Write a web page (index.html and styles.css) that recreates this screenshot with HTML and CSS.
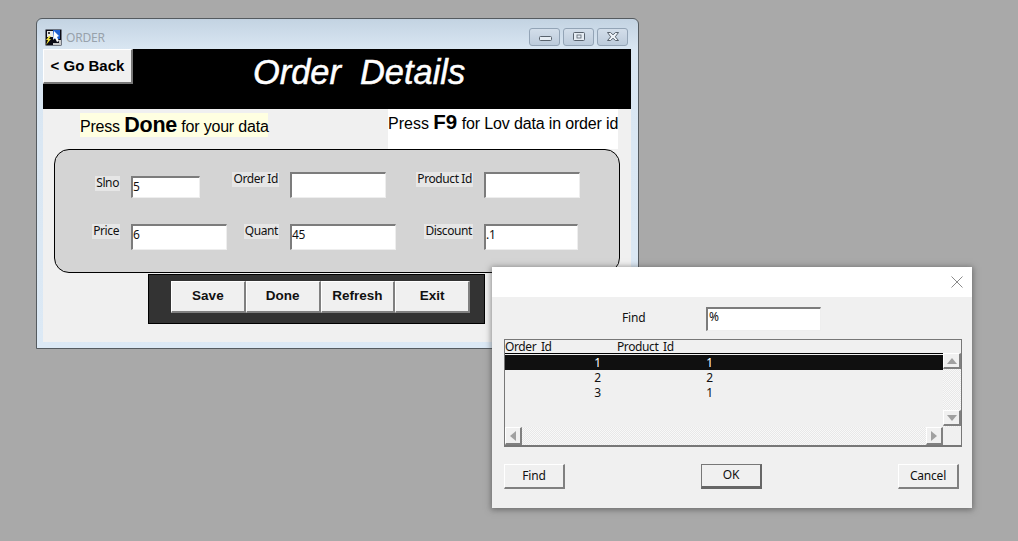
FILE: index.html
```html
<!DOCTYPE html>
<html lang="en">
<head>
<meta charset="utf-8">
<title>ORDER</title>
<link rel="stylesheet" href="styles.css">
</head>
<body>
<main class="desktop">
  <section class="window">
    <div class="titlebar">
      <svg class="app-icon" width="17" height="17" viewBox="0 0 17 17">
        <rect x="0.5" y="0.5" width="16" height="16" fill="#0a0a14"/>
        <path d="M2 2h6v6H2z" fill="#e8e8e8"/>
        <path d="M3 3h2v2H3z" fill="#444"/>
        <path d="M8 1h7v9H8z" fill="#1f5fd0"/>
        <path d="M9 2l5 5-2 1 2 4-2 1-2-4-2 2z" fill="#fff"/>
        <path d="M4 7l-3 4h2l-2 5 5-6H4l2-3z" fill="#f2e23a"/>
        <path d="M14 11h2v5H8v-2h6z" fill="#c8c8c8"/>
      </svg>
      <span class="caption">ORDER</span>
      <div class="winbtns">
        <span class="winbtn"><svg width="16" height="10" viewBox="0 0 16 10"><rect x="2.500" y="4.500" width="12" height="4" rx="1" fill="#e6edf4" stroke="#59636e"/></svg></span>
        <span class="winbtn"><svg width="14" height="12" viewBox="0 0 14 12"><rect x="1.500" y="1.500" width="11" height="8" rx="1" fill="#e6edf4" stroke="#59636e"/><rect x="5" y="4" width="4" height="3" fill="#e6edf4" stroke="#59636e" stroke-width="0.8"/></svg></span>
        <span class="winbtn"><svg width="16" height="12" viewBox="0 0 16 12"><path d="M2.500 1.500h3L8 3.800l2.500-2.300h3L10.300 5.800l3.200 3.700h-3L8 7.300 5.500 9.500h-3l3.200-3.700z" fill="#eef3f8" stroke="#59636e"/></svg></span>
      </div>
    </div>
    <div class="client">
      <header class="banner">
        <button class="goback" type="button">&lt; Go Back</button>
        <h1 class="heading">Order  Details</h1>
      </header>
      <div class="hints">
        <p class="hint-done">Press <b>Done</b> for your data</p>
        <p class="hint-f9">Press <b>F9</b> <span class="tight">for Lov data in order id</span></p>
      </div>
      <form class="panel">
        <label class="lbl low">Slno</label>
        <input class="fld low short" value="5">
        <label class="lbl">Order Id</label>
        <input class="fld w96" value="">
        <label class="lbl">Product Id</label>
        <input class="fld w96" value="">
        <label class="lbl">Price</label>
        <input class="fld w96" value="6">
        <label class="lbl">Quant</label>
        <input class="fld w106" value="45">
        <label class="lbl">Discount</label>
        <input class="fld w94" value=".1">
      </form>
      <div class="toolbar">
        <button class="tbtn" type="button">Save</button>
        <button class="tbtn" type="button">Done</button>
        <button class="tbtn" type="button">Refresh</button>
        <button class="tbtn" type="button">Exit</button>
      </div>
    </div>
  </section>

  <section class="dialog">
    <div class="dlg-title">
      <svg class="dlg-x" width="12" height="12" viewBox="0 0 12 12"><path d="M0.500 0.500l11 11M11.500 0.500l-11 11" stroke="#8a8a8a" fill="none"/></svg>
    </div>
    <div class="dlg-body">
      <div class="find-row">
        <span class="find-label">Find</span>
        <input class="fld find-input" value="%">
      </div>
      <div class="list">
        <div class="list-head"><span class="hcol1">Order Id</span><span>Product Id</span></div>
        <div class="list-grid">
          <div class="rows">
            <div class="row selected"><span class="c1">1</span><span class="c2">1</span></div>
            <div class="row"><span class="c1">2</span><span class="c2">2</span></div>
            <div class="row"><span class="c1">3</span><span class="c2">1</span></div>
          </div>
          <div class="vscroll">
            <span class="sbtn vbtn"><svg width="10" height="6" viewBox="0 0 10 6"><path d="M5 0l5 6H0z" fill="#a0a0a0"/></svg></span>
            <span class="sbtn vbtn"><svg width="10" height="6" viewBox="0 0 10 6"><path d="M0 0h10L5 6z" fill="#a0a0a0"/></svg></span>
          </div>
          <div class="hscroll">
            <span class="sbtn hbtn"><svg width="6" height="10" viewBox="0 0 6 10"><path d="M6 0v10L0 5z" fill="#a0a0a0"/></svg></span>
            <span class="sbtn hbtn"><svg width="6" height="10" viewBox="0 0 6 10"><path d="M0 0l6 5-6 5z" fill="#a0a0a0"/></svg></span>
          </div>
          <div class="corner"></div>
        </div>
      </div>
      <div class="dlg-actions">
        <button class="dbtn" type="button">Find</button>
        <button class="dbtn default" type="button">OK</button>
        <button class="dbtn" type="button">Cancel</button>
      </div>
    </div>
  </section>
</main>
</body>
</html>
```
FILE: styles.css
```css
* { box-sizing: border-box; }
html, body { margin: 0; height: 100%; }
body { background: #a9a9a9; overflow: hidden; font-family: "Noto Sans", sans-serif; font-size: 12px; color: #111; }
p, h1 { margin: 0; }
button, input { font-family: inherit; margin: 0; }

.desktop { position: relative; width: 1018px; height: 541px; }

/* main window */
.window {
  position: absolute; left: 36px; top: 18px; width: 603px; height: 331px;
  border: 1px solid #555b60; border-radius: 6px 6px 0 0;
  padding: 0 7px 6px 6px;
  background: linear-gradient(#c3d3e2 0, #d9e6f2 30px, #dce9f5 100%);
}
.titlebar { height: 30px; display: flex; align-items: flex-start; }
.app-icon { margin: 10px 0 0 2px; flex: none; }
.caption { margin: 11px 0 0 4px; color: #98a2ab; font-size: 12px; line-height: 16px; letter-spacing: -0.2px; }
.winbtns { margin: 9px 3px 0 auto; display: flex; gap: 3px; }
.winbtn {
  width: 31px; height: 18px; display: flex; align-items: center; justify-content: center;
  border: 1px solid #93a4b6; border-radius: 3px;
  background: linear-gradient(#d3deea, #bccbdb);
}
.client { height: 293px; background: #f0f0f0; }

.banner { height: 60px; background: #000; display: flex; align-items: flex-start; }
.goback {
  width: 90px; height: 35px; padding: 0 0 1px;
  background: #f0f0f0; color: #000;
  border: 0; border-right: 2px solid #777; border-bottom: 2px solid #777;
  border-top: 1px solid #fff; border-left: 1px solid #fff;
  font: bold 15px "Liberation Sans", sans-serif;
}
.heading {
  margin: 3px 0 0 120px; white-space: pre; color: #fff;
  font: italic 34.400px/40px "Liberation Sans", sans-serif;
  -webkit-text-stroke: 0.5px #fff;
}

.hints { height: 40px; display: flex; align-items: flex-start; font-family: "Liberation Sans", sans-serif; font-size: 16px; color: #000; }
.hint-done { margin: 4px 0 0 37px; width: 188px; height: 24px; line-height: 25px; background: #ffffe1; white-space: nowrap; letter-spacing: -0.2px; }
.hint-done b { font-size: 21.500px; }
.hint-f9 { margin-left: auto; margin-right: 13px; width: 230px; height: 40px; background: #fff; line-height: 26px; white-space: nowrap; }
.hint-f9 b { font-size: 20.500px; }
.tight { letter-spacing: -0.15px; }

.panel {
  margin: 0 11px; height: 124px; padding: 22px 0 0 0;
  background: #d4d4d4; border: 1px solid #000; border-radius: 15px;
  display: grid; grid-template-columns: 65px 92px 45px 115px 57px 96px; grid-template-rows: 26px 26px;
  column-gap: 11px; row-gap: 26px; align-items: start;
}
.lbl { justify-self: end; height: 15px; line-height: 14px; white-space: nowrap; background: #e6e6e6; padding: 0 1px; color: #111; letter-spacing: -0.4px; }
.lbl.low { margin-top: 4px; }
.fld {
  height: 26px; padding: 0 0 6px 0; font-size: 12px; color: #111; letter-spacing: -0.3px;
  background: #fff; border-style: solid; border-width: 2px 1px 1px 2px;
  border-color: #7c7c7c #eee #eee #7c7c7c; outline: 0; border-radius: 0;
}
.fld.low { margin-top: 4px; }
.short { width: 69px; height: 22px; padding-bottom: 2px; }
.w96 { width: 96px; }
.w106 { width: 106px; }
.w94 { width: 94px; }

.toolbar {
  margin: 1px 0 0 105px; width: 337px; height: 50px; padding: 6px 0 0 22px;
  background: #333; border: 1px solid #000; display: flex; align-items: flex-start;
}
.tbtn {
  flex: none; width: 74.750px; height: 32px; padding: 0 0 2px;
  background: #f0f0f0; color: #111;
  border: 0; border-top: 1px solid #fff; border-left: 1px solid #fff;
  border-right: 2px solid #808080; border-bottom: 2px solid #808080;
  font: bold 13.500px "Liberation Sans", sans-serif;
}

/* LOV dialog */
.dialog {
  position: absolute; left: 492px; top: 267px; width: 480px; height: 241px;
  background: #f0f0f0; box-shadow: 0 1px 6px 1px rgba(60,60,60,.55);
}
.dlg-title { height: 30px; background: #fff; display: flex; justify-content: flex-end; padding: 9px 9px 0 0; }
.dlg-x { flex: none; }
.dlg-body { padding: 10px 10px 0 12px; }
.find-row { display: flex; align-items: center; padding-left: 118px; }
.find-label { width: 84px; padding-bottom: 4px; letter-spacing: -0.2px; }
.find-input { width: 115px; height: 24px; padding: 0 0 6px 1px; }
.list {
  margin-top: 8px; height: 108px; display: flex; flex-direction: column;
  border: 1px solid #777; border-bottom-width: 2px;
}
.list-head { height: 13px; line-height: 14px; display: flex; flex: none; white-space: nowrap; word-spacing: 2px; letter-spacing: -0.4px; }
.hcol1 { width: 112px; }
.list-grid { flex: 1; min-height: 0; display: grid; grid-template-columns: 1fr 18px; grid-template-rows: 1fr 18px; }
.rows { border-top: 1px solid #000; padding-top: 1px; min-width: 0; }
.row { height: 15px; line-height: 15px; display: flex; }
.row.selected { background: #101010; color: #fff; }
.c1 { width: 96px; text-align: right; }
.c2 { width: 112px; text-align: right; }
.vscroll, .hscroll {
  display: flex; justify-content: space-between;
  background-color: #f4f4f4;
  background-image: repeating-conic-gradient(#e8e8e8 0 25%, #f8f8f8 0 50%);
  background-size: 2px 2px;
}
.vscroll { flex-direction: column; padding-bottom: 1px; }
.sbtn {
  display: flex; align-items: center; justify-content: center; flex: none;
  background: #f0f0f0; border-style: solid; border-width: 1px 2px 2px 1px;
  border-color: #fff #808080 #808080 #fff;
}
.vbtn { height: 16px; }
.hbtn { width: 17px; }
.corner { background: #f0f0f0; }

.dlg-actions { margin: 17px 3px 0 0; display: flex; justify-content: space-between; }
.dbtn {
  width: 61px; height: 25px; padding: 0 0 2px; font-size: 12px; letter-spacing: -0.2px; color: #111;
  background: #f0f0f0; border-style: solid; border-width: 1px 2px 2px 1px;
  border-color: #fff #808080 #808080 #fff;
}
.dbtn.default { border-color: #777 #666 #666 #777; border-width: 1px 2px 3px 1px; }
```
